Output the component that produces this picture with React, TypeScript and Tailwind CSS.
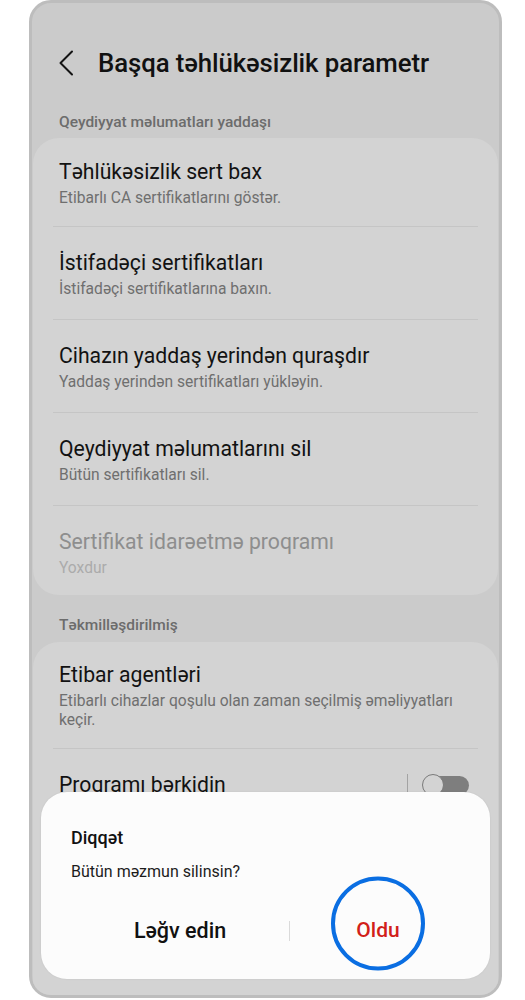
import React from "react";

type Item = {
  title: string;
  sub?: string;
  disabled?: boolean;
};

const storage: Item[] = [
  { title: "Təhlükəsizlik sert bax", sub: "Etibarlı CA sertifikatlarını göstər." },
  { title: "İstifadəçi sertifikatları", sub: "İstifadəçi sertifikatlarına baxın." },
  { title: "Cihazın yaddaş yerindən quraşdır", sub: "Yaddaş yerindən sertifikatları yükləyin." },
  { title: "Qeydiyyat məlumatlarını sil", sub: "Bütün sertifikatları sil." },
  { title: "Sertifikat idarəetmə proqramı", sub: "Yoxdur", disabled: true },
];

function Divider() {
  return <div className="mx-[20px] h-px bg-[#c5c5c5]" />;
}

function Row({ item, first, last }: { item: Item; first?: boolean; last?: boolean }) {
  const pad = first ? "pt-[21px] pb-[18px]" : last ? "pt-[23px] pb-[17px]" : "pt-[23px] pb-[20px]";
  return (
    <div className={`px-[26px] ${pad}`}>
      <div className={`text-[21.2px] leading-[26px] ${item.disabled ? "text-[#8e8e8e]" : "text-[#121212]"}`}>
        {item.title}
      </div>
      {item.sub && (
        <div className={`mt-[4px] text-[15.6px] leading-[19px] ${item.disabled ? "text-[#ababab]" : "text-[#6f6f6f]"}`}>
          {item.sub}
        </div>
      )}
    </div>
  );
}

function Toggle() {
  return (
    <div className="flex items-center">
      <div className="w-px h-[22px] bg-[#a3a3a3] mr-[14px]" />
      <div className="relative w-[47px] h-[22px]">
        <div className="absolute right-0 top-[2px] w-[38px] h-[19px] rounded-full bg-[#7e7e7e]" />
        <div className="absolute left-0 top-0 w-[22px] h-[22px] rounded-full border-[1.5px] border-[#7a7a7a] bg-[#d3d3d3]" />
      </div>
    </div>
  );
}

export default function App() {
  return (
    <div className="w-[525px] h-[1000px] bg-white" style={{ fontFamily: "Roboto, 'Noto Sans', sans-serif" }}>
      <div className="relative ml-[29px] w-[473px] h-[998px] border-[3px] border-[#bdbdbd] rounded-[22px] bg-[#cbcbcb] overflow-hidden">
        {/* header */}
        <div className="pt-[36px] h-[84px] flex items-center">
          <div className="flex items-center h-[48px]">
            <svg className="ml-[26px]" width="16" height="26" viewBox="0 0 16 26" fill="none">
              <path d="M14 1.5L2.5 13L14 24.5" stroke="#141414" strokeWidth="2" strokeLinecap="round" strokeLinejoin="round" />
            </svg>
            <h1 className="ml-[24px] text-[25.8px] font-medium text-[#111] tracking-[-0.1px]">
              Başqa təhlükəsizlik parametr
            </h1>
          </div>
        </div>

        <div className="mt-[25px] px-[27px] text-[15.5px] leading-[20px] font-medium text-[#6c6c6c]">
          Qeydiyyat məlumatları yaddaşı
        </div>

        <div className="mt-[6px] mx-px rounded-[26px] bg-[#d3d3d3]">
          {storage.map((it, i) => (
            <div key={it.title}>
              {i > 0 && <Divider />}
              <Row item={it} first={i === 0} last={i === storage.length - 1} />
            </div>
          ))}
        </div>

        <div className="pt-[20px] pb-[7px] px-[27px] text-[15.5px] leading-[20px] font-medium text-[#6c6c6c]">
          Təkmilləşdirilmiş
        </div>

        <div className="mx-px h-[400px] rounded-[26px] bg-[#d3d3d3]">
          <div className="px-[26px] pt-[20px] pb-[18px]">
            <div className="text-[21.2px] leading-[26px] text-[#121212]">Etibar agentləri</div>
            <div className="mt-[4px] text-[15.6px] leading-[19px] text-[#6f6f6f]">
              Etibarlı cihazlar qoşulu olan zaman seçilmiş əməliyyatları keçir.
            </div>
          </div>
          <Divider />
          <div className="px-[26px] pt-[23px] pb-[21px] flex items-center justify-between">
            <div className="text-[21.2px] leading-[26px] text-[#121212]">Proqramı bərkidin</div>
            <div className="mr-[3px]">
              <Toggle />
            </div>
          </div>
        </div>

        {/* dialog */}
        <div className="absolute left-[9px] right-[9px] bottom-[16px] h-[187px] rounded-[26px] bg-[#fcfcfc] shadow-[0_0_2px_rgba(0,0,0,0.08)]">
          <div className="pl-[30px] pt-[33px] text-[18px] leading-[26px] font-medium text-[#111]">Diqqət</div>
          <div className="pl-[30px] mt-[10px] text-[16px] leading-[22px] text-[#1c1c1c]">Bütün məzmun silinsin?</div>
          <div className="mt-[28px] flex items-center pl-[30px] pr-[24px]">
            <div className="w-[218px] h-[40px] flex items-center justify-center text-[21.5px] font-medium text-[#111]">
              Ləğv edin
            </div>
            <div className="w-px h-[20px] bg-[#dadada]" />
            <div className="relative flex-1 h-[40px] flex items-center justify-center text-[21px] font-medium text-[#d21f1a]">
              Oldu
              <div className="absolute left-1/2 top-1/2 -translate-x-1/2 -translate-y-[58%] w-[94px] h-[94px] rounded-full border-[4.5px] border-[#0a6ee2]" />
            </div>
          </div>
        </div>
      </div>
    </div>
  );
}
